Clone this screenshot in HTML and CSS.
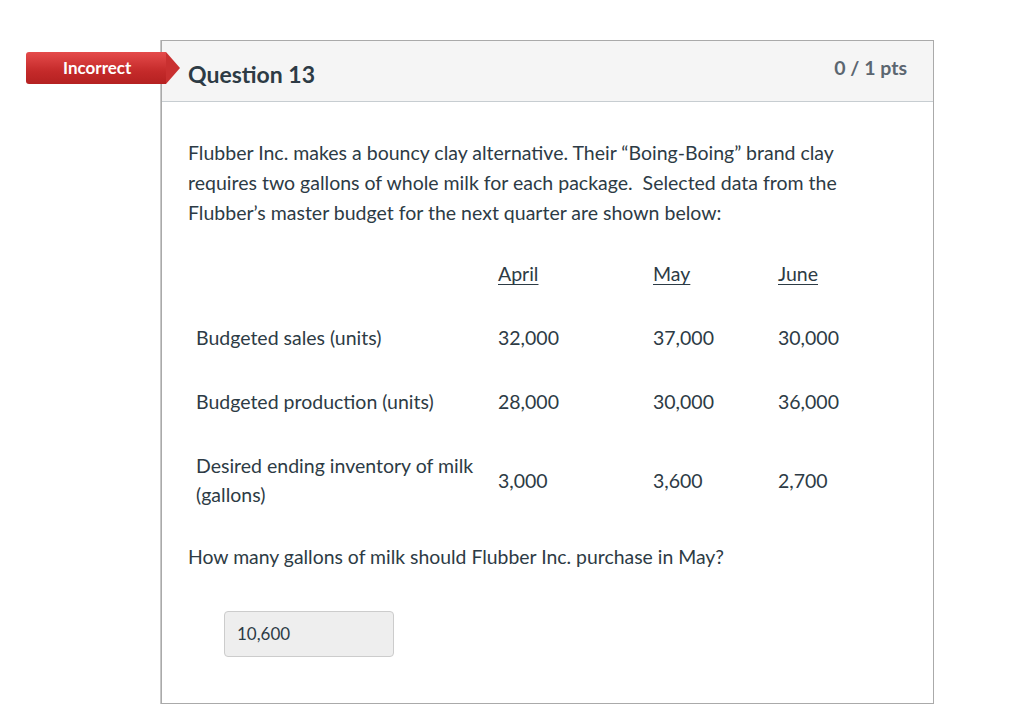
FILE: index.html
```html
<!DOCTYPE html>
<html>
<head>
<meta charset="utf-8">
<link rel="stylesheet" href="styles.css">
</head>
<body>
<div class="page">
  <div class="badge">Incorrect</div>
  <div class="question">
    <div class="qhead">
      <span class="qtitle">Question 13</span>
      <span class="qpts">0 / 1 pts</span>
    </div>
    <div class="qbody">
      <p class="intro">Flubber Inc. makes a bouncy clay alternative. Their “Boing-Boing” brand clay requires two gallons of whole milk for each package.&nbsp; Selected data from the Flubber’s master budget for the next quarter are shown below:</p>
      <div class="tbl">
        <div class="row">
          <div class="c1"></div>
          <div class="c2"><u>April</u></div>
          <div class="c3"><u>May</u></div>
          <div class="c4"><u>June</u></div>
        </div>
        <div class="row">
          <div class="c1">Budgeted sales (units)</div>
          <div class="c2">32,000</div>
          <div class="c3">37,000</div>
          <div class="c4">30,000</div>
        </div>
        <div class="row">
          <div class="c1">Budgeted production (units)</div>
          <div class="c2">28,000</div>
          <div class="c3">30,000</div>
          <div class="c4">36,000</div>
        </div>
        <div class="row">
          <div class="c1">Desired ending inventory of milk (gallons)</div>
          <div class="c2">3,000</div>
          <div class="c3">3,600</div>
          <div class="c4">2,700</div>
        </div>
      </div>
      <p class="ask">How many gallons of milk should Flubber Inc. purchase in May?</p>
      <div class="answer">10,600</div>
    </div>
  </div>
</div>
</body>
</html>
```

FILE: styles.css
```css
html, body {
  margin: 0;
  padding: 0;
  background: #ffffff;
}
body {
  font-family: Lato, "Open Sans", "Liberation Sans", sans-serif;
  color: #2d3b45;
}
.page {
  position: relative;
  padding: 40px 0 0 161px;
}
.badge {
  position: absolute;
  left: 26px;
  top: 52px;
  width: 140px;
  height: 32px;
  line-height: 32px;
  padding-left: 37px;
  box-sizing: border-box;
  color: #fff;
  font-size: 17px;
  font-weight: 700;
  background: linear-gradient(#e54b4b, #c42a2a 60%, #b52121);
  border-radius: 3px 0 0 3px;
  z-index: 2;
}
.badge::after {
  content: "";
  position: absolute;
  right: -14px;
  top: 0;
  width: 0;
  height: 0;
  border-top: 16px solid transparent;
  border-bottom: 16px solid transparent;
  border-left: 14px solid #c93030;
}
.question {
  width: 771px;
  height: 662px;
  border: 1px solid #aaaaaa;
  box-shadow: -1px 0 0 #c8c8c8;
}
.qhead {
  height: 60px;
  background: #f5f5f5;
  border-bottom: 1px solid #c7cdd1;
  display: flex;
  align-items: center;
  justify-content: space-between;
  padding: 0 26px 0 26px;
}
.qtitle {
  font-size: 23px;
  font-weight: 700;
  color: #2d3b45;
  margin-top: 5px;
}
.qpts {
  font-size: 19.5px;
  font-weight: 700;
  color: #5b6670;
  margin-top: -7px;
}
.qbody {
  padding: 36px 26px 0 26px;
}
.intro {
  margin: 0;
  font-size: 19.5px;
  line-height: 30px;
  width: 690px;
}
.tbl {
  margin-top: 14px;
  font-size: 19.5px;
  line-height: 29px;
}
.row {
  display: grid;
  grid-template-columns: 302px 155px 125px 100px;
  align-items: center;
}
.row > div {
  padding: 17px 8px 18px 8px;
  min-height: 29px;
}
.row u {
  text-decoration-thickness: 1px;
  text-underline-offset: 3px;
}
.ask {
  margin: 15px 0 0 0;
  font-size: 19.4px;
  line-height: 30px;
}
.answer {
  margin: 39px 0 0 36px;
  width: 170px;
  height: 46px;
  box-sizing: border-box;
  background: #eeeeee;
  border: 1px solid #cccccc;
  border-radius: 4px;
  padding-left: 12px;
  font-size: 17px;
  line-height: 44px;
  color: #2d3b45;
}
```
